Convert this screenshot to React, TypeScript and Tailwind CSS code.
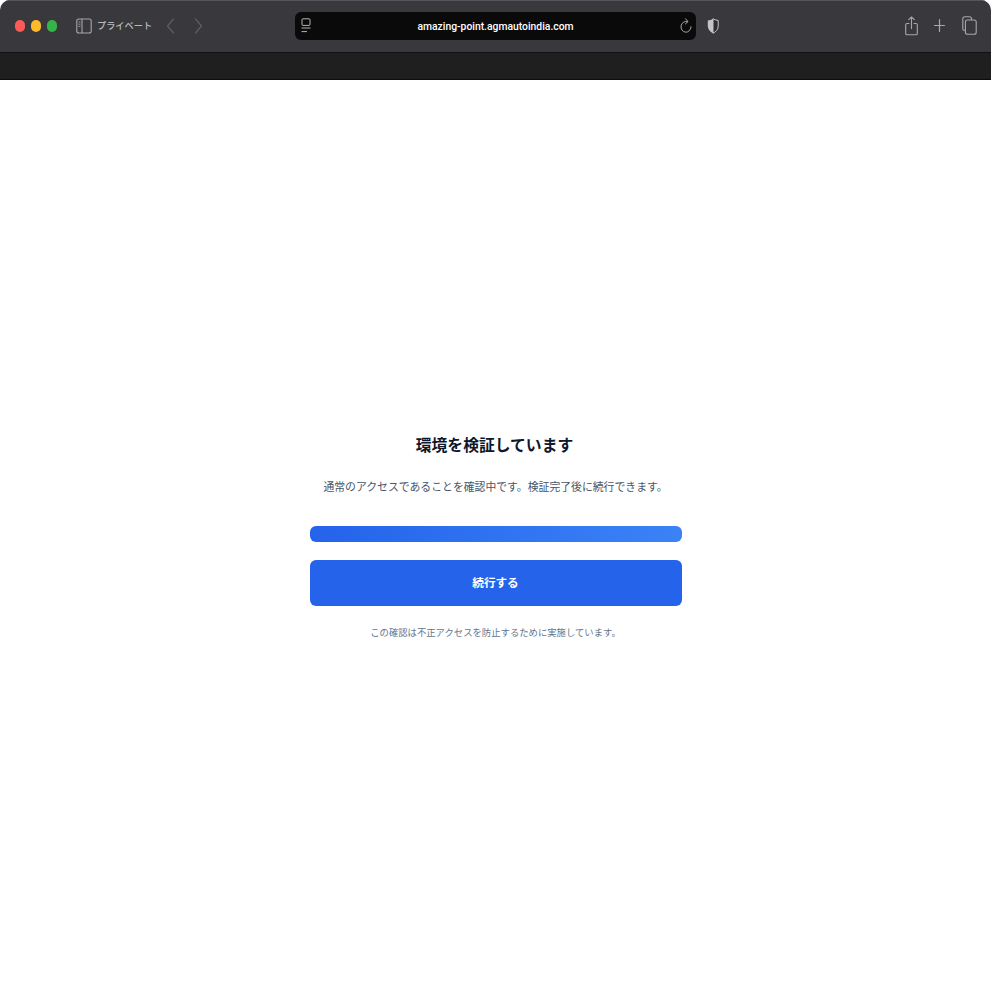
const jp = { fontFamily: '"Noto Sans CJK JP", "Inter", sans-serif' };

function SidebarIcon() {
  return (
    <svg width="16" height="16" viewBox="0 0 16 16" fill="none" stroke="#a8a8ac" strokeWidth="1.1">
      <rect x="0.8" y="1" width="14.4" height="14" rx="2" />
      <path d="M6 1v14" />
      <path d="M2.5 4h2M2.5 6.2h2M2.5 8.4h2" strokeWidth="0.9" />
    </svg>
  );
}

function Chevron({ dir }: { dir: "l" | "r" }) {
  return (
    <svg width="9" height="16" viewBox="0 0 9 16" fill="none" stroke="#5c5c62" strokeWidth="1.3" strokeLinecap="round" strokeLinejoin="round">
      <path d={dir === "l" ? "M7.5 1 1.5 8l6 7" : "M1.5 1l6 7-6 7"} />
    </svg>
  );
}

function ReaderIcon() {
  return (
    <svg width="10" height="15" viewBox="0 0 10 15" fill="none" stroke="#b4b4b8" strokeWidth="1">
      <rect x="1" y="0.8" width="8" height="6.6" rx="1" />
      <path d="M0.5 10h9M0.5 13.6h5.5" />
    </svg>
  );
}

function ReloadIcon() {
  return (
    <svg width="12" height="16" viewBox="0 0 12 16" fill="none" stroke="#a8a8ac" strokeWidth="1" strokeLinecap="round" strokeLinejoin="round">
      <path d="M7.4 3.600A5 5.400 0 1 0 11 8.800" />
      <path d="M5.600 0.800 8 3.600 5.400 6" />
    </svg>
  );
}

function ShieldIcon() {
  return (
    <svg width="12" height="16" viewBox="0 0 12 16">
      <path d="M6 0.800C4.400 1.800 2.600 2.300 0.800 2.500V8c0 3.400 2.200 5.700 5.200 7.300V0.800Z" fill="#c4c4c8" />
      <path d="M6 0.800C7.600 1.800 9.400 2.300 11.200 2.500V8c0 3.400-2.200 5.700-5.200 7.300V0.800Z" fill="#2e2e32" stroke="#c4c4c8" strokeWidth="1" strokeLinejoin="round" />
    </svg>
  );
}

function ShareIcon() {
  return (
    <svg width="13" height="20" viewBox="0 0 13 20" fill="none" stroke="#a8a8ac" strokeWidth="1.1" strokeLinecap="round" strokeLinejoin="round">
      <path d="M4 7.500H2A1.300 1.300 0 0 0 0.700 8.800v8.700A1.300 1.300 0 0 0 2 18.800h9a1.300 1.300 0 0 0 1.300-1.300V8.800A1.300 1.300 0 0 0 11 7.500H9" />
      <path d="M6.500 12.500V1M3.700 3.700 6.500 1l2.800 2.700" />
    </svg>
  );
}

function PlusIcon() {
  return (
    <svg width="11" height="13" viewBox="0 0 11 13" fill="none" stroke="#a8a8ac" strokeWidth="1.2" strokeLinecap="round">
      <path d="M5.500 0.600v11.800M0.600 6.500h9.800" />
    </svg>
  );
}

function TabsIcon() {
  return (
    <svg width="15" height="19" viewBox="0 0 15 19" fill="none" stroke="#a8a8ac" strokeWidth="1.1">
      <path d="M3.300 14.500H2.600A1.800 1.800 0 0 1 0.800 12.700V2.600A1.800 1.800 0 0 1 2.600 0.800h5.100A1.800 1.800 0 0 1 9.500 2.600V4" />
      <rect x="3.400" y="4" width="10.800" height="14.200" rx="2" />
    </svg>
  );
}

export default function App() {
  return (
    <div className="flex min-h-[991px] flex-col overflow-hidden rounded-t-[10px] rounded-b-[6px] bg-white" style={jp}>
      <header className="flex h-[53px] items-center border-t border-b border-t-[#55555a] border-b-[#111113] bg-[#38383d] pr-[14px] pb-[2px] pl-[15px]">
        <div className="flex items-center gap-[6px]">
          <span className="h-[12px] w-[10px] rounded-full bg-[#fb5a58]" />
          <span className="h-[12px] w-[10px] rounded-full bg-[#fdbb2c]" />
          <span className="h-[12px] w-[10px] rounded-full bg-[#36b44a]" />
        </div>
        <div className="ml-[19px] flex items-center gap-[5px]">
          <SidebarIcon />
          <span className="text-[9.2px] font-medium text-[#b8b8bc]">プライベート</span>
        </div>
        <div className="ml-[14px] flex items-center gap-[19px]">
          <Chevron dir="l" />
          <Chevron dir="r" />
        </div>
        <div className="ml-[92px] flex h-[28px] w-[401px] items-center rounded-[6px] bg-[#0a0a0b] pr-[4px] pl-[6px]">
          <ReaderIcon />
          <span className="flex-1 scale-x-[0.9] pt-[1px] text-center text-[11.5px] leading-[16px] font-medium text-white" style={{ fontFamily: '"Roboto", sans-serif' }}>
            amazing-point.agmautoindia.com
          </span>
          <ReloadIcon />
        </div>
        <div className="ml-[11px]">
          <ShieldIcon />
        </div>
        <div className="ml-auto flex items-center gap-[17px]">
          <span className="mr-[-1px]">
            <ShareIcon />
          </span>
          <PlusIcon />
          <TabsIcon />
        </div>
      </header>
      <div className="h-[27px] border-b border-b-[#0c0c0d] bg-[#1f1f1f]" />
      <main className="flex flex-1 flex-col items-center pt-[353px]">
        <section className="flex w-[372px] flex-col items-center">
          <h1 className="mr-[2px] text-[15.8px] leading-[24px] font-bold text-[#0f172a]">環境を検証しています</h1>
          <p className="mt-[21px] text-[10.85px] leading-[16px] whitespace-nowrap text-[#475569]">
            通常のアクセスであることを確認中です。検証完了後に続行できます。
          </p>
          <div className="mt-[32px] h-[16px] w-full rounded-[6px] bg-gradient-to-r from-[#2563eb] to-[#3b82f6]" />
          <button className="mt-[18px] h-[46px] w-full rounded-[6px] bg-[#2563eb] text-[11.6px] font-bold text-white">
            続行する
          </button>
          <p className="mt-[19px] text-[9.35px] leading-[14px] whitespace-nowrap text-[#64748b]">
            この確認は不正アクセスを防止するために実施しています。
          </p>
        </section>
      </main>
    </div>
  );
}
